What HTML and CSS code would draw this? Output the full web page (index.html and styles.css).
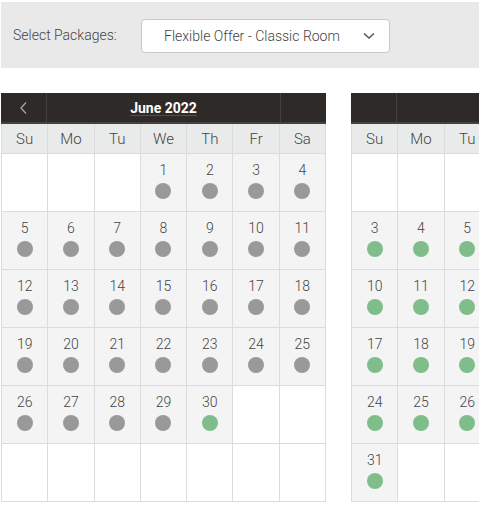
FILE: index.html
```html
<!DOCTYPE html>
<html>
<head>
<meta charset="utf-8">
<link rel="stylesheet" href="styles.css">
</head>
<body>
<div class="page">
  <div class="toolbar">
    <span class="label">Select Packages:</span>
    <div class="select">
      <span class="select-text">Flexible Offer - Classic Room</span>
      <svg class="chev" width="12" height="8" viewBox="0 0 12 8"><path d="M1 1.5 L6 6 L11 1.5" fill="none" stroke="#555" stroke-width="1.5"/></svg>
    </div>
  </div>
  <div class="calendars">
    <div class="cal">
      <div class="cal-head">
        <div class="nav"><svg width="10" height="14" viewBox="0 0 10 14"><path d="M7 1.5 L2 7 L7 12.5" fill="none" stroke="#aaa3b4" stroke-width="1.3"/></svg></div>
        <div class="title">June 2022</div>
        <div class="nav"></div>
      </div>
      <div class="grid">
        <div class="dow">Su</div><div class="dow">Mo</div><div class="dow">Tu</div><div class="dow">We</div><div class="dow">Th</div><div class="dow">Fr</div><div class="dow">Sa</div>
        <div class="cell empty"></div><div class="cell empty"></div><div class="cell empty"></div>
        <div class="cell"><span class="num">1</span><span class="dot"></span></div>
        <div class="cell"><span class="num">2</span><span class="dot"></span></div>
        <div class="cell"><span class="num">3</span><span class="dot"></span></div>
        <div class="cell"><span class="num">4</span><span class="dot"></span></div>
        <div class="cell"><span class="num">5</span><span class="dot"></span></div>
        <div class="cell"><span class="num">6</span><span class="dot"></span></div>
        <div class="cell"><span class="num">7</span><span class="dot"></span></div>
        <div class="cell"><span class="num">8</span><span class="dot"></span></div>
        <div class="cell"><span class="num">9</span><span class="dot"></span></div>
        <div class="cell"><span class="num">10</span><span class="dot"></span></div>
        <div class="cell"><span class="num">11</span><span class="dot"></span></div>
        <div class="cell"><span class="num">12</span><span class="dot"></span></div>
        <div class="cell"><span class="num">13</span><span class="dot"></span></div>
        <div class="cell"><span class="num">14</span><span class="dot"></span></div>
        <div class="cell"><span class="num">15</span><span class="dot"></span></div>
        <div class="cell"><span class="num">16</span><span class="dot"></span></div>
        <div class="cell"><span class="num">17</span><span class="dot"></span></div>
        <div class="cell"><span class="num">18</span><span class="dot"></span></div>
        <div class="cell"><span class="num">19</span><span class="dot"></span></div>
        <div class="cell"><span class="num">20</span><span class="dot"></span></div>
        <div class="cell"><span class="num">21</span><span class="dot"></span></div>
        <div class="cell"><span class="num">22</span><span class="dot"></span></div>
        <div class="cell"><span class="num">23</span><span class="dot"></span></div>
        <div class="cell"><span class="num">24</span><span class="dot"></span></div>
        <div class="cell"><span class="num">25</span><span class="dot"></span></div>
        <div class="cell"><span class="num">26</span><span class="dot"></span></div>
        <div class="cell"><span class="num">27</span><span class="dot"></span></div>
        <div class="cell"><span class="num">28</span><span class="dot"></span></div>
        <div class="cell"><span class="num">29</span><span class="dot"></span></div>
        <div class="cell"><span class="num">30</span><span class="dot green"></span></div>
        <div class="cell empty"></div><div class="cell empty"></div>
        <div class="cell empty"></div><div class="cell empty"></div><div class="cell empty"></div><div class="cell empty"></div><div class="cell empty"></div><div class="cell empty"></div><div class="cell empty"></div>
      </div>
    </div>
    <div class="cal">
      <div class="cal-head">
        <div class="nav"></div>
        <div class="title">July 2022</div>
        <div class="nav"></div>
      </div>
      <div class="grid">
        <div class="dow">Su</div><div class="dow">Mo</div><div class="dow">Tu</div><div class="dow">We</div><div class="dow">Th</div><div class="dow">Fr</div><div class="dow">Sa</div>
        <div class="cell empty"></div><div class="cell empty"></div><div class="cell empty"></div><div class="cell empty"></div><div class="cell empty"></div>
        <div class="cell"><span class="num">1</span><span class="dot green"></span></div>
        <div class="cell"><span class="num">2</span><span class="dot green"></span></div>
        <div class="cell"><span class="num">3</span><span class="dot green"></span></div>
        <div class="cell"><span class="num">4</span><span class="dot green"></span></div>
        <div class="cell"><span class="num">5</span><span class="dot green"></span></div>
        <div class="cell"><span class="num">6</span><span class="dot green"></span></div>
        <div class="cell"><span class="num">7</span><span class="dot green"></span></div>
        <div class="cell"><span class="num">8</span><span class="dot green"></span></div>
        <div class="cell"><span class="num">9</span><span class="dot green"></span></div>
        <div class="cell"><span class="num">10</span><span class="dot green"></span></div>
        <div class="cell"><span class="num">11</span><span class="dot green"></span></div>
        <div class="cell"><span class="num">12</span><span class="dot green"></span></div>
        <div class="cell"><span class="num">13</span><span class="dot green"></span></div>
        <div class="cell"><span class="num">14</span><span class="dot green"></span></div>
        <div class="cell"><span class="num">15</span><span class="dot green"></span></div>
        <div class="cell"><span class="num">16</span><span class="dot green"></span></div>
        <div class="cell"><span class="num">17</span><span class="dot green"></span></div>
        <div class="cell"><span class="num">18</span><span class="dot green"></span></div>
        <div class="cell"><span class="num">19</span><span class="dot green"></span></div>
        <div class="cell"><span class="num">20</span><span class="dot green"></span></div>
        <div class="cell"><span class="num">21</span><span class="dot green"></span></div>
        <div class="cell"><span class="num">22</span><span class="dot green"></span></div>
        <div class="cell"><span class="num">23</span><span class="dot green"></span></div>
        <div class="cell"><span class="num">24</span><span class="dot green"></span></div>
        <div class="cell"><span class="num">25</span><span class="dot green"></span></div>
        <div class="cell"><span class="num">26</span><span class="dot green"></span></div>
        <div class="cell"><span class="num">27</span><span class="dot green"></span></div>
        <div class="cell"><span class="num">28</span><span class="dot green"></span></div>
        <div class="cell"><span class="num">29</span><span class="dot green"></span></div>
        <div class="cell"><span class="num">30</span><span class="dot green"></span></div>
        <div class="cell"><span class="num">31</span><span class="dot green"></span></div>
        <div class="cell empty"></div><div class="cell empty"></div><div class="cell empty"></div><div class="cell empty"></div><div class="cell empty"></div><div class="cell empty"></div>
      </div>
    </div>
  </div>
</div>
</body>
</html>
```
FILE: styles.css
```css
* { box-sizing: border-box; }
html, body { margin: 0; padding: 0; background: #fff; }
body {
  font-family: Roboto, "Liberation Sans", Arial, sans-serif;
  font-weight: 300;
  color: #444;
  overflow: hidden;
}
.page {
  padding: 2px 0 0 1px;
  width: 900px;
}
.toolbar {
  height: 66px;
  width: 478px;
  background: #e9e9e9;
  display: flex;
  align-items: center;
  padding-left: 12px;
}
.label {
  font-size: 14px;
  color: #444;
  width: 128px;
}
.select {
  width: 249px;
  height: 34px;
  background: #fff;
  border: 1px solid #c8c8c8;
  border-radius: 4px;
  display: flex;
  align-items: center;
  padding-left: 22px;
  padding-right: 14px;
  margin-top: 1px;
}
.select-text {
  font-size: 14px;
  color: #444;
  flex: 1;
}
.chev { display: block; margin-top: 1px; }
.calendars {
  display: flex;
  gap: 25px;
  margin-top: 25px;
}
.cal {
  width: 325px;
  flex: none;
}
.cal-head {
  display: grid;
  grid-template-columns: 46px 1fr 46px;
  height: 31px;
  background: #2e2a27;
  border-bottom: 2px solid #45413e;
}
.nav {
  display: flex;
  align-items: center;
  justify-content: center;
  border-right: 1px solid #45413e;
}
.nav:last-child { border-right: 0; border-left: 1px solid #45413e; }
.nav svg { display: block; }
.title {
  display: flex;
  align-items: center;
  justify-content: center;
  color: #fff;
  font-weight: 700;
  font-size: 14px;
  text-decoration: underline;
  text-decoration-color: rgba(255,255,255,0.18);
  text-underline-offset: 2px;
}
.grid {
  display: grid;
  grid-template-columns: repeat(7, 1fr);
  border-left: 1px solid #dcdcdc;
}
.dow {
  height: 30px;
  background: #e9ebeb;
  border-right: 1px solid #dcdcdc;
  border-bottom: 1px solid #dcdcdc;
  display: flex;
  align-items: center;
  justify-content: center;
  font-size: 15px;
  color: #444;
}
.cell {
  height: 58px;
  background: #f4f4f4;
  border-right: 1px solid #dcdcdc;
  border-bottom: 1px solid #dcdcdc;
  display: flex;
  flex-direction: column;
  align-items: center;
  padding-top: 8px;
}
.cell.empty { background: #fff; }
.num {
  font-size: 14px;
  line-height: 16px;
  color: #444;
}
.dot {
  width: 16px;
  height: 16px;
  border-radius: 50%;
  background: #999;
  margin-top: 5px;
}
.dot.green { background: #7fbe8a; }
```
